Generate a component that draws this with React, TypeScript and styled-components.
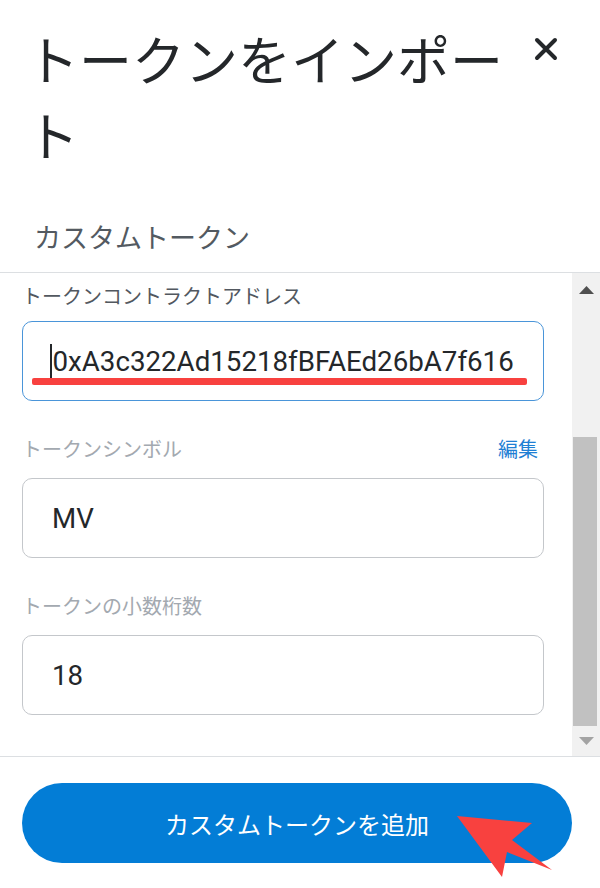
import React from "react";
import styled, { createGlobalStyle } from "styled-components";

const GlobalStyle = createGlobalStyle`
  html, body { margin: 0; padding: 0; background: #ffffff; }
  body { font-family: Roboto, "Noto Sans CJK JP", sans-serif; }
  * { box-sizing: border-box; }
`;

const Page = styled.div`
  position: relative;
  width: 600px;
  height: 888px;
  overflow: hidden;
  display: flex;
  flex-direction: column;
  background: #ffffff;
`;

const Header = styled.div`
  display: flex;
  align-items: flex-start;
  gap: 12px;
  padding: 20px 42px 0 26px;
`;

const Title = styled.h1`
  flex: 1;
  margin: 0;
  font-family: "Noto Sans CJK JP", sans-serif;
  font-weight: 400;
  font-size: 53px;
  line-height: 76px;
  color: #24272a;
`;

const CloseButton = styled.button`
  margin-top: 17px;
  width: 24px;
  height: 24px;
  padding: 0;
  border: none;
  background: transparent;
  display: flex;
  cursor: pointer;
`;

const Subtitle = styled.div`
  padding: 47px 30px 17px 34px;
  font-family: "Noto Sans CJK JP", sans-serif;
  font-size: 27px;
  line-height: 36px;
  color: #535a61;
`;

const ScrollArea = styled.div`
  display: flex;
  height: 485px;
  border-top: 1px solid #dcdfe2;
  border-bottom: 1px solid #dcdfe2;
`;

const Form = styled.div`
  flex: 1;
  display: flex;
  flex-direction: column;
  padding: 10px 28px 0 22px;
`;

const Field = styled.div<{ $first?: boolean }>`
  display: flex;
  flex-direction: column;
  margin-top: ${(p) => (p.$first ? "0" : "35px")};
`;

const LabelRow = styled.div<{ $gap: number }>`
  display: flex;
  justify-content: space-between;
  align-items: center;
  margin-bottom: ${(p) => p.$gap}px;
`;

const Label = styled.label<{ $dim?: boolean }>`
  font-family: Roboto, "Noto Sans CJK JP", sans-serif;
  font-size: 20px;
  line-height: 28px;
  color: ${(p) => (p.$dim ? "#a3a9b0" : "#52585f")};
`;

const EditLink = styled.span`
  font-family: Roboto, "Noto Sans CJK JP", sans-serif;
  font-size: 20px;
  line-height: 28px;
  color: #1f7fd4;
  margin-right: 6px;
`;

const InputBox = styled.div<{ $focused?: boolean }>`
  position: relative;
  height: 80px;
  display: flex;
  align-items: center;
  padding-left: 29px;
  border: 1.5px solid ${(p) => (p.$focused ? "#4a95d9" : "#c4c7cb")};
  border-radius: 10px;
  background: #ffffff;
`;

const Caret = styled.span`
  width: 1.5px;
  height: 35px;
  background: #24272a;
  margin-left: -2px;
  margin-right: 1px;
`;

const ValueText = styled.span`
  font-family: Roboto, sans-serif;
  font-size: 27.7px;
  color: #24272a;
  white-space: nowrap;
`;

const RedUnderline = styled.div`
  position: absolute;
  left: 9px;
  right: 16px;
  top: 56px;
  height: 7px;
  border-radius: 2px;
  background: #f8413f;
`;

const Scrollbar = styled.div`
  width: 28px;
  display: flex;
  flex-direction: column;
  background: #f1f1f1;
`;

const ScrollArrow = styled.div<{ $h: number }>`
  height: ${(p) => p.$h}px;
  display: flex;
  align-items: center;
  justify-content: center;
`;

const Track = styled.div`
  flex: 1;
  display: flex;
  flex-direction: column;
  justify-content: flex-end;
`;

const Thumb = styled.div`
  height: 289px;
  margin: 0 3px 0 1px;
  background: #c1c1c1;
`;

const Footer = styled.div`
  padding: 26px 28px 0 22px;
`;

const PrimaryButton = styled.button`
  width: 100%;
  height: 80px;
  border: none;
  border-radius: 40px;
  background: #037dd6;
  color: #ffffff;
  font-family: "Noto Sans CJK JP", sans-serif;
  font-size: 24px;
  cursor: pointer;
`;

const PointerOverlay = styled.svg`
  position: absolute;
  left: 440px;
  top: 800px;
  width: 130px;
  height: 88px;
  pointer-events: none;
`;

export default function App() {
  return (
    <Page>
      <GlobalStyle />
      <Header>
        <Title>トークンをインポート</Title>
        <CloseButton aria-label="閉じる">
          <svg width="24" height="24" viewBox="0 0 24 24">
            <path d="M3 3 L21 21 M21 3 L3 21" stroke="#24272a" strokeWidth="4" strokeLinecap="round" />
          </svg>
        </CloseButton>
      </Header>
      <Subtitle>カスタムトークン</Subtitle>
      <ScrollArea>
        <Form>
          <Field $first>
            <LabelRow $gap={10}>
              <Label>トークンコントラクトアドレス</Label>
            </LabelRow>
            <InputBox $focused>
              <Caret />
              <ValueText>0xA3c322Ad15218fBFAEd26bA7f616</ValueText>
              <RedUnderline />
            </InputBox>
          </Field>
          <Field>
            <LabelRow $gap={14}>
              <Label $dim>トークンシンボル</Label>
              <EditLink>編集</EditLink>
            </LabelRow>
            <InputBox>
              <ValueText>MV</ValueText>
            </InputBox>
          </Field>
          <Field>
            <LabelRow $gap={14}>
              <Label $dim>トークンの小数桁数</Label>
            </LabelRow>
            <InputBox>
              <ValueText>18</ValueText>
            </InputBox>
          </Field>
        </Form>
        <Scrollbar>
          <ScrollArrow $h={34}>
            <svg width="15" height="8" viewBox="0 0 15 8">
              <path d="M7.5 0 L15 8 L0 8 Z" fill="#505050" />
            </svg>
          </ScrollArrow>
          <Track>
            <Thumb />
          </Track>
          <ScrollArrow $h={30}>
            <svg width="15" height="8" viewBox="0 0 15 8">
              <path d="M0 0 L15 0 L7.5 8 Z" fill="#a3a3a3" />
            </svg>
          </ScrollArrow>
        </Scrollbar>
      </ScrollArea>
      <Footer>
        <PrimaryButton>カスタムトークンを追加</PrimaryButton>
      </Footer>
      <PointerOverlay viewBox="440 800 130 88">
        <polygon
          points="457,816 532,823 512,840 552,870 507,852 502,877"
          fill="#f8413f"
        />
      </PointerOverlay>
    </Page>
  );
}
